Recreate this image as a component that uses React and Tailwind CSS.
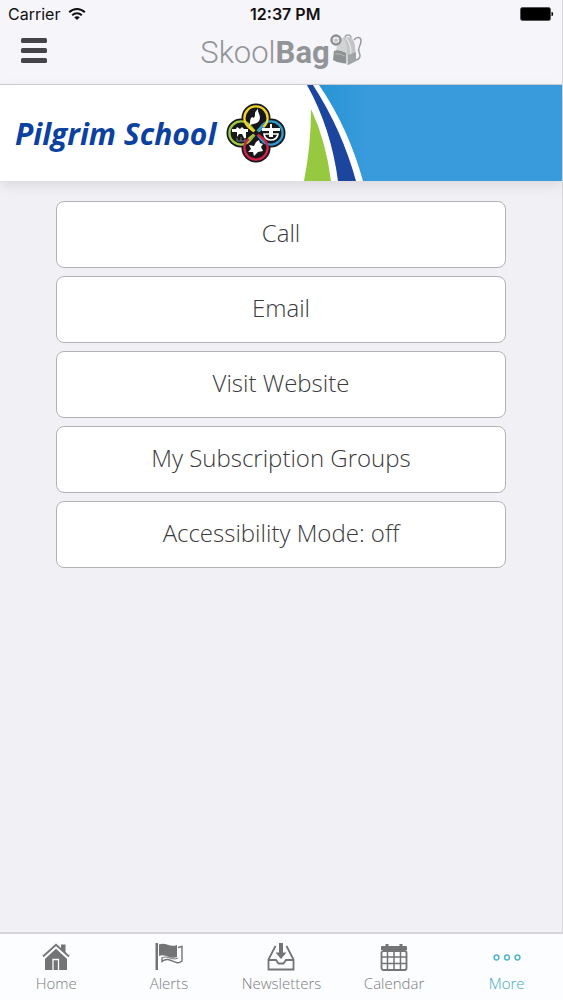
const ACTIONS = ['Call', 'Email', 'Visit Website', 'My Subscription Groups', 'Accessibility Mode: off'];

const TABS = [
  { label: 'Home', Icon: HomeIcon },
  { label: 'Alerts', Icon: FlagIcon },
  { label: 'Newsletters', Icon: InboxIcon },
  { label: 'Calendar', Icon: CalendarIcon },
  { label: 'More', Icon: MoreIcon, active: true },
];

function WifiIcon() {
  return (
    <svg className="w-[18px] h-[14px]" viewBox="0 0 18 14" fill="none" stroke="#111" strokeWidth="2">
      <path d="M1.2 5.2C5.6 .9 12.4 .9 16.8 5.2" />
      <path d="M4.2 8.3C6.9 5.7 11.1 5.7 13.8 8.3" />
      <path d="M9 13L6.2 10.2C7.8 8.8 10.2 8.8 11.8 10.2Z" fill="#111" stroke="none" />
    </svg>
  );
}

function BatteryIcon() {
  return (
    <svg className="w-[34px] h-[14px]" viewBox="0 0 34 14">
      <rect x=".5" y=".5" width="30" height="13" rx="2" fill="#000" stroke="#555" />
      <path d="M31.5 5H32.5Q34 7 32.5 9H31.5Z" fill="#000" />
    </svg>
  );
}

function StatusBar() {
  return (
    <div className="grid grid-cols-[auto_1fr_auto] items-center h-7 px-2 text-base text-[#111]">
      <div className="flex items-center gap-2">
        <span>Carrier</span>
        <WifiIcon />
      </div>
      <span className="pl-1 pr-10 text-center font-semibold whitespace-nowrap">12:37 PM</span>
      <BatteryIcon />
    </div>
  );
}

function BackpackIcon() {
  return (
    <svg className="w-8 h-8" viewBox="0 0 32 32" fill="none">
      <path d="M15 4Q15 1 18 1Q21 1 21 4" stroke="#a4a7a9" strokeWidth="1.4" />
      <path d="M5 26L7 10Q10 3 16 3L21 4Q24 6 25 12L26 27L18 31Z" fill="#d3d4d5" />
      <path d="M16 3L21 4Q24 6 25 12L26 27L18 31L17 16Q17 8 13 4Z" fill="#c2c4c5" />
      <path d="M16 4Q21 10 21 20" stroke="#e6e7e8" strokeWidth="1.2" />
      <path d="M4 17Q9 15 16 19V29Q9 30 3 26Z" fill="#8e9193" />
      <path d="M5 20Q10 19 15 22" stroke="#b5b8b9" strokeWidth="1" />
      <path d="M18 21L26 18V27L18 31Z" fill="#a2a5a7" />
      <path d="M24 6C27 2 31 3 31 7C31 12 27 14 29 18C31 22 30 25 26 26" stroke="#999c9e" strokeWidth="1.5" />
      <circle cx="6" cy="6" r="4.5" fill="#f5f4f7" stroke="#8e9193" strokeWidth="2.4" />
      <path d="M6 3L7 5.2L9.2 5.4L7.5 6.9L8 9L6 7.9L4 9L4.5 6.9L2.8 5.4L5 5.2Z" fill="#c6c8c9" />
    </svg>
  );
}

function Header() {
  return (
    <header className="bg-[#f6f5f9] border-b border-[#cfced3]">
      <StatusBar />
      <div className="grid grid-cols-[64px_1fr_64px] h-14 pb-3">
        <button type="button" aria-label="Menu" className="flex items-center pl-5">
          <svg className="w-7 h-7" viewBox="0 0 28 28" fill="#454447">
            <rect x="1" y="2" width="26" height="5" rx="1.5" />
            <rect x="1" y="12" width="26" height="5" rx="1.5" />
            <rect x="1" y="22" width="26" height="5" rx="1.5" />
          </svg>
        </button>
        <div className="flex items-center justify-center text-[#929597]">
          <span className="font-[Roboto,sans-serif] text-[31px] leading-none font-light pt-1">
            Skool<b className="font-bold">Bag</b>
          </span>
          <BackpackIcon />
        </div>
      </div>
    </header>
  );
}

const LOOP = 'M30 30L22.65 23.97A11.6 11.6 0 1 1 37.35 23.97L30 30';

function Emblem() {
  return (
    <svg className="w-[60px] h-[60px] shrink-0" viewBox="0 0 60 60" fill="none">
      <g fill="#17171a">
        <circle cx="30" cy="15" r="14.5" />
        <circle cx="15" cy="30" r="14.5" />
        <circle cx="45" cy="30" r="14.5" />
        <circle cx="30" cy="45" r="14.5" />
      </g>
      <g strokeWidth="2.4">
        <path d={LOOP} stroke="#2b9bd0" transform="rotate(90 30 30)" />
        <path d={LOOP} stroke="#9ccb42" transform="rotate(270 30 30)" />
        <path d={LOOP} stroke="#f3d427" />
        <path d={LOOP} stroke="#d61f48" transform="rotate(180 30 30)" />
        <path d="M22.65 36.03L30 30" stroke="#9ccb42" />
        <path d="M37.35 23.97L30 30" stroke="#2b9bd0" />
      </g>
      <path d="M26.5 30L30 27L33.5 30L30 33Z" fill="#17171a" />
      <g fill="#fff">
        <path d="M32 5C31 10 36 13 33 18C30 22 26 20 23 23C25 19 23 17 26 14C28 16 29 14 29 11C29 8 31 8 32 5Z" />
        <path d="M33 37L34 40L37 41L35 44L37 48L32 49L28 53L27 49L22 49L25 46L23 42L28 43L30 39Z" />
        <path d="M6 26H10L11 24L14 26L16 24L18 26H22V29H20V35H18L16 31H13L11 34V29H6Z" />
        <path d="M44 21H46V25H54V28H47V34H43V28H36V25H44Z" />
      </g>
      <path d="M38 31Q39 37 45 37Q51 37 52 31Z" stroke="#fff" strokeWidth="1.6" />
      <path d="M11 35V38H19V35M15 34V38" stroke="#6d7d88" strokeWidth="1" />
    </svg>
  );
}

function Banner() {
  return (
    <div className="flex h-24 bg-white shadow-[0_4px_12px_rgba(0,0,0,0.1)]">
      <div className="flex items-center gap-[10px] pl-[15px] pr-4">
        <span className="font-['Open_Sans',sans-serif] text-[30px] font-bold italic text-[#0b419f] whitespace-nowrap">
          Pilgrim School
        </span>
        <Emblem />
      </div>
      <svg className="w-[68px] h-24 shrink-0" viewBox="0 0 68 96">
        <defs>
          <linearGradient id="sky" x1="0" x2="1">
            <stop offset="0.4" stopColor="#2a96d6" />
            <stop offset="1" stopColor="#3a9bdc" />
          </linearGradient>
        </defs>
        <rect width="68" height="96" fill="url(#sky)" />
        <path d="M0 0H17Q46 42 61 96H0Z" fill="#fff" />
        <path d="M5 0H11Q40 45 54 96H36Q29 43 5 0Z" fill="#1c469e" />
        <path d="M9 24Q24 56 29 96H2Q9 61 9 24Z" fill="#96c93f" />
      </svg>
      <div className="flex-1 bg-[#3a9bdc]" />
    </div>
  );
}

function HomeIcon() {
  return (
    <svg className="w-7 h-7" viewBox="0 0 28 28" fill="none">
      <path d="M3 14L14 4L25 14V27H3Z" fill="#737476" />
      <path d="M19 1.5H23.5V11L19 7Z" fill="#737476" />
      <path d="M1.5 15.5L14 4L26.5 15.5" stroke="#fcfdff" strokeWidth="2.4" />
      <path d="M1 13.5L14 1.8L27 13.5" stroke="#737476" strokeWidth="1.8" />
      <path d="M11 27V16.5H16.5V27" stroke="#fcfdff" strokeWidth="1.3" />
    </svg>
  );
}

function FlagIcon() {
  return (
    <svg className="w-7 h-7" viewBox="0 0 28 28" fill="none">
      <path d="M.5 0H3V27H.5Z" fill="#737476" />
      <path d="M4 1.5C11 -1 15 5 22 2V14C15 17 11 10 4 13Z" fill="#737476" />
      <path d="M23 4.5L27 3.5V18C20 24 15 12 7 18.5V14.5" stroke="#737476" strokeWidth="1.4" />
      <path d="M7 14.8C13 12 17 18 23 15" stroke="#737476" strokeWidth="1" />
    </svg>
  );
}

function InboxIcon() {
  return (
    <svg className="w-7 h-7" viewBox="0 0 28 28" fill="none" stroke="#737476" strokeWidth="1.8">
      <path d="M8.5 3L1.5 16.5V26.5H26.5V16.5L19.5 3" />
      <path d="M1.5 17H9L11.5 20.5H16.5L19 17H26.5" />
      <path d="M12 0H16V9.5H19.5L14 16L8.5 9.5H12Z" fill="#737476" stroke="none" />
    </svg>
  );
}

function CalendarIcon() {
  return (
    <svg className="w-7 h-7" viewBox="0 0 28 28" fill="none" stroke="#737476" strokeWidth="1.8">
      <rect x="1.5" y="8" width="25" height="19" rx="2" />
      <path d="M7.5 8V27M14 8V27M20.5 8V27M1.5 14H26.5M1.5 20.5H26.5" strokeWidth="1.5" />
      <path d="M1 7V4Q1 3 2 3H5.5V1H8.5V3H19.5V1H22.5V3H26Q27 3 27 4V7Z" fill="#737476" stroke="none" />
    </svg>
  );
}

function MoreIcon() {
  return (
    <svg className="w-7 h-7" viewBox="0 0 28 28" fill="none" stroke="#52b5c8" strokeWidth="1.5">
      <circle cx="3.5" cy="14.5" r="2.4" />
      <circle cx="14" cy="14.5" r="2.4" />
      <circle cx="24.5" cy="14.5" r="2.4" />
    </svg>
  );
}

export default function App() {
  return (
    <div className="flex flex-col min-h-screen bg-[#f1f0f4] font-[Inter,'Liberation_Sans',sans-serif]">
      <div className="flex flex-col flex-1 border-r border-[#d9d8dc]">
        <Header />
        <Banner />
        <main className="flex flex-col items-center gap-2 pt-5 pb-8 font-['Open_Sans',sans-serif]">
          {ACTIONS.map((label) => (
            <button
              key={label}
              type="button"
              className="w-4/5 h-[67px] pb-1 bg-white border border-[#b3b2b6] rounded-lg text-2xl font-light text-[#3b3a3d]"
            >
              {label}
            </button>
          ))}
        </main>
      </div>
      <nav className="grid grid-cols-5 h-[68px] pt-[9px] bg-[#fcfdff] border-t-2 border-[#d5d5d9] font-['Open_Sans',sans-serif]">
        {TABS.map(({ label, Icon, active }) => (
          <a
            key={label}
            href={`#${label.toLowerCase()}`}
            aria-current={active ? 'page' : undefined}
            className={`flex flex-col items-center text-[15px] leading-6 font-light ${active ? 'text-[#43a9c4]' : 'text-[#7b7c7e]'}`}
          >
            <Icon />
            {label}
          </a>
        ))}
      </nav>
    </div>
  );
}
